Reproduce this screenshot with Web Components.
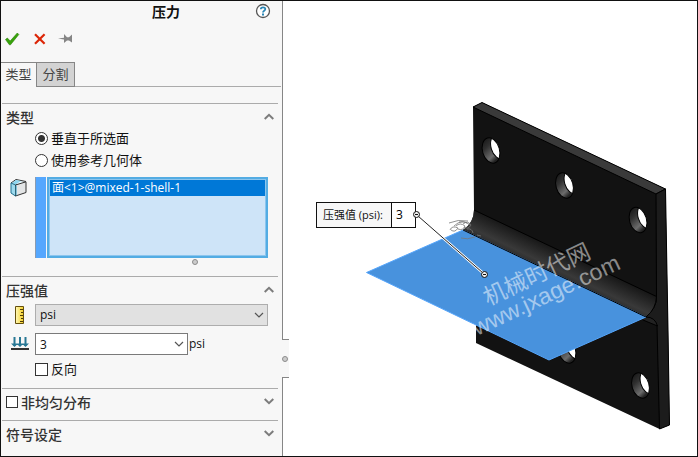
<!DOCTYPE html>
<html lang="zh-CN">
<head>
<meta charset="utf-8">
<title>压力</title>
<style>
html,body{margin:0;height:100%}
body{font:12px/16px "Open Sans","Noto Sans CJK SC",sans-serif;color:#111;background:#fff}
</style>
</head>
<body>
<app-frame>
  <property-panel slot="panel" heading="压力">
    <panel-section heading="类型" open>
      <radio-choice slot="body"></radio-choice>
      <selection-list slot="body"></selection-list>
    </panel-section>
    <panel-section heading="压强值" open>
      <pressure-fields slot="body"></pressure-fields>
    </panel-section>
    <panel-section heading="非均匀分布" checkable></panel-section>
    <panel-section heading="符号设定"></panel-section>
  </property-panel>
  <model-view slot="view"></model-view>
</app-frame>
<script>
const define = (name, html, setup) => customElements.define(name, class extends HTMLElement {
  connectedCallback() {
    if (this.shadowRoot) return;
    this.attachShadow({mode: 'open'}).innerHTML = '<style>*{box-sizing:border-box}button{font:inherit;color:inherit;background:none;border:0;padding:0;display:block}svg{display:block}</style>' + html;
    if (setup) setup(this, this.shadowRoot);
  }
});

define('app-frame', `
<style>
:host{display:flex;min-height:100vh;border:1px solid #111;box-sizing:border-box;background:#fff}
.side{flex:none;width:282px;display:flex;position:relative;background:#f7f7f7;border-right:1px solid #868686}
.view{flex:1;min-width:0;display:flex}
.grip{position:absolute;left:100%;top:338px;width:7px;height:39px;background:#f7f7f7;border:solid #868686;border-width:1px 0;display:flex;align-items:center;z-index:1;box-shadow:-1px 0 #f7f7f7}
i{width:6px;height:6px;border:1px solid #8c8c8c;border-radius:50%;background:#ccc}
</style>
<div class="side"><slot name="panel"></slot><button class="grip" aria-label="折叠面板"><i></i></button></div>
<div class="view"><slot name="view"></slot></div>`);

define('property-panel', `
<style>
:host{flex:1;min-width:0;display:block}
header{display:grid;grid-template-columns:1fr auto;align-items:center;padding:2px 11px 0 76px}
h1{margin:0;font-size:14px;line-height:16px;font-weight:600;text-align:center;font-family:"Noto Sans CJK SC",sans-serif}
.actions{display:flex;align-items:center;gap:11px;padding:5px 4px 0 3px;height:35px;margin-bottom:8px}
.tabs{display:flex;padding-right:1px}
.tabs button{height:25px;border:1px solid #868686;padding:0 5px 2px;font-size:13px;line-height:20px;color:#444}
.tabs .on{border-width:1px 0 0;padding:0 4px 2px;width:35px}
.tabs .off{background:#d3d3d3;width:39px}
.tabs span{flex:1;border-bottom:1px solid #ababab}
main{padding:16px 4px 0 1px}
</style>
<header><h1></h1><button aria-label="帮助"><svg width="16" height="16" viewBox="0 0 16 16"><circle cx="8" cy="8" r="6.5" fill="#fff" stroke="#555" stroke-width="1.3"/><path d="M5.8 6.3C5.8 3.6 10.3 3.7 10.3 6.1C10.3 7.8 8 7.7 8 9.5" fill="none" stroke="#2a86b5" stroke-width="1.8"/><path d="M7 10.6h2v2H7z" fill="#2a86b5"/></svg></button></header>
<div class="actions">
<button aria-label="确定"><svg width="16" height="16" viewBox="0 0 16 16"><path d="M1.5 8.5L3.3 7L6.2 10L13.3 2L14.8 3.5L6.5 13.8H5.4Z" fill="#37a30b" stroke="#278000" stroke-width=".6"/></svg></button>
<button aria-label="取消"><svg width="16" height="16" viewBox="0 0 16 16"><path d="M4 3.2L13.6 12.8M13.6 3.2L4 12.8" stroke="#dc2607" stroke-width="2.2" fill="none"/></svg></button>
<button aria-label="固定"><svg width="16" height="16" viewBox="0 0 16 16"><path d="M0 7.5L6 6.7V3L9 6.2H11L14 3.5V11.5L11 9.4H9L6 12V8.5Z" fill="#858585"/></svg></button>
</div>
<div class="tabs" role="tablist"><button class="on" role="tab" aria-selected="true">类型</button><button class="off" role="tab">分割</button><span></span></div>
<main><slot></slot></main>`, (el, r) => r.querySelector('h1').textContent = el.getAttribute('heading'));

define('panel-section', `
<style>
:host{display:block;border-top:1px solid #ababab}
header{display:flex;align-items:center;height:23px;padding:2px 4px 0 4px}
:host(:not([open])) header{height:31px;padding-top:0;padding-bottom:6px}
h2,label{margin:0;flex:1;font-size:14px;line-height:20px;font-weight:500;color:#333;font-family:"Noto Sans CJK SC",sans-serif}
label{display:flex;align-items:center;gap:3px}
input{appearance:none;width:12px;height:12px;margin:0;border:1px solid #333;background:#fff}
:host(:not([open])) button svg{transform:scaleY(-1)}
</style>
<header><button aria-label="展开或折叠"><svg width="10" height="7" viewBox="0 0 10 7"><path d="M.7 6L5 1.8L9.3 6" fill="none" stroke="#7c7c7c" stroke-width="2"/></svg></button></header>
<slot name="body"></slot>`, (el, r) => {
  const h = document.createElement(el.hasAttribute('checkable') ? 'label' : 'h2');
  if (h.localName === 'label') h.innerHTML = '<input type="checkbox">';
  h.append(el.getAttribute('heading'));
  r.querySelector('header').prepend(h);
});

define('radio-choice', `
<style>
:host{display:block;padding:0 0 6px 33px}
label{display:flex;align-items:center;gap:3px;height:22px;font-size:13px;line-height:20px}
input{appearance:none;width:13px;height:13px;margin:0;border:1px solid #333;border-radius:50%;background:#fff}
input:checked{background:radial-gradient(circle,#333 0 3px,#fff 4px)}
</style>
<label><input type="radio" name="direction" checked>垂直于所选面</label>
<label><input type="radio" name="direction">使用参考几何体</label>`);

define('selection-list', `
<style>
:host{display:grid;grid-template-columns:33px 11px 1fr;padding:0 10px 11px 0}
svg{margin:1px 0 0 8px}
.swatch{background:#55a7fe;border-left:1px solid #8a9bb0}
ul{margin:0 0 0 1px;padding:1px;list-style:none;height:81px;background:#cee4f8;border:2px solid #53ace3;outline:1px solid #8cc5ee;outline-offset:-3px}
li{height:16px;padding:0 2px;font-size:12px;line-height:16px;color:#fff;background:#0078d7;white-space:nowrap}
.dot{grid-column:1/-1;justify-self:center;width:6px;height:6px;margin:1px 0 0 120px;border:1px solid #8c8c8c;border-radius:50%;background:#ccc}
</style>
<svg width="18" height="20" viewBox="0 0 18 20"><path d="M1 5L6 1.5L16 3.5L11 7.5Z" fill="#eaf8fd" stroke="#333"/><path d="M1 5L5.5 7V18L1 15Z" fill="#9edaee" stroke="#20718f"/><path d="M5.5 7L16 3.8V14.5L5.5 18Z" fill="#e3e5e6" stroke="#333"/><path d="M2 5L6 2L11 3L5.500 6.500Z" fill="#8fd6ee"/><path d="M6 7.5V17.5" stroke="#259bc5"/></svg>
<div class="swatch"></div>
<ul role="listbox" aria-label="所选面"><li role="option" aria-selected="true">面&lt;1&gt;@mixed-1-shell-1</li></ul>
<i class="dot"></i>`);

define('pressure-fields', `
<style>
:host{display:grid;grid-template-columns:33px 1fr;row-gap:7px;padding:4px 10px 11px 0}
svg.icon{margin:auto;justify-self:start;margin-left:7px}
.box{position:relative;display:flex}
.box>svg{position:absolute;right:4px;top:8px;pointer-events:none}
.row{display:flex;align-items:center;gap:1px}
.row .box{width:153px}
select,.box input{appearance:none;width:100%;height:22px;margin:0;padding:0 4px;border:1px solid #adadad;border-radius:0;background:#e1e1e1;font:inherit;color:#111;outline:0}
.box input{background:#fff;border-color:#7a7a7a}
.check{grid-column:2;display:flex;align-items:center;gap:3px;font-size:13px;line-height:15px}
.check input{appearance:none;width:13px;height:13px;margin:0;border:1px solid #333;background:#fff}
</style>
<svg class="icon" width="18" height="18" viewBox="0 0 18 18"><defs><linearGradient id="gold"><stop stop-color="#fff9ba"/><stop offset="1" stop-color="#f5cf25"/></linearGradient></defs><path d="M6.5.5h8v17h-8z" fill="url(#gold)" stroke="#65500c"/><path d="M11 3.5h3M12 6.5h2M11 9.5h3M12 12.5h2M11 15.5h3" stroke="#4d3d09"/></svg>
<div class="box"><select aria-label="单位"><option>psi</option></select><svg width="10" height="6" viewBox="0 0 10 6"><path d="M1 1L5 5L9 1" fill="none" stroke="#555" stroke-width="1.2"/></svg></div>
<svg class="icon" width="20" height="14" viewBox="0 0 20 14"><path d="M5.5 0V9M11 0V9M16.5 0V9" stroke="#287895" stroke-width="2"/><path d="M2 6.5H9L5.5 10ZM7.500 6.5H14.5L11 10ZM13 6.5H20L16.5 10Z" fill="#287895"/><path d="M2 11h18v2H2z" fill="#333"/></svg>
<div class="row"><div class="box"><input id="value" aria-label="压强值" value="3"><svg width="10" height="6" viewBox="0 0 10 6"><path d="M1 1L5 5L9 1" fill="none" stroke="#555" stroke-width="1.2"/></svg></div><label for="value">psi</label></div>
<label class="check"><input type="checkbox">反向</label>`);

define('model-view', `
<style>
:host{flex:1;min-width:0;display:flex;background:#fff}
.scene{flex:1;width:100%;height:calc(100vh - 2px)}
.callout{display:flex;width:100px;height:26px;border:1px solid #111;background:#fff;color:#111;font-size:12px;line-height:24px}
label{flex:1;padding-left:6px;background:#f7f7f7;white-space:nowrap;font-size:11px}
input{width:24px;border:0;border-left:1px solid #111;padding:0 4px;margin:0;font:inherit;outline:0;background:#fff}
.mark{fill:#fff;fill-opacity:.52}
</style>
<svg class="scene" viewBox="283 1 414 455" preserveAspectRatio="xMinYMin meet">
<defs>
<linearGradient id="bore" x1="0" y1="0" x2=".35" y2="1"><stop stop-color="#111"/><stop offset=".4" stop-color="#303030"/><stop offset=".8" stop-color="#6c6c6c"/><stop offset="1" stop-color="#222"/></linearGradient>
<linearGradient id="fillet" gradientUnits="userSpaceOnUse" x1="566" y1="252" x2="553" y2="279"><stop stop-color="#151515"/><stop offset=".65" stop-color="#393939"/><stop offset="1" stop-color="#242424"/></linearGradient>
<clipPath id="rim"><ellipse rx="8.5" ry="13" transform="rotate(-16)"/></clipPath>
<g id="hole"><ellipse rx="8.5" ry="13" transform="rotate(-16)" fill="url(#bore)"/><g clip-path="url(#rim)"><ellipse cx="8.5" cy="-4" rx="8.5" ry="13" transform="rotate(-16 8.5 -4)" fill="#fff" stroke="#000"/></g><ellipse rx="8.5" ry="13" transform="rotate(-16)" fill="none" stroke="#000"/></g>
</defs>
<path d="M473 107L482 102.500L665.500 189L668 330L669.500 425L659.500 429L476 343V230H463Q474 223 474 210Z" fill="#121212"/>
<path d="M473 107L482 102.500L665.500 189L656 194Z" fill="#3a3a3a" stroke="#000"/>
<path d="M656 194L665.500 189L668 330L669.500 425L659.500 429L657 325Q651 319 646 317Q657 307 656.500 297Z" fill="#1c1c1c" stroke="#000"/>
<path d="M474 210L656.500 297Q656 309 646 317L463 230Q474 222 474 210Z" fill="url(#fillet)"/>
<path d="M474 210L656.500 296.500Q656 309 646 317" fill="none" stroke="#000"/>
<path d="M646 317Q655 317 657.500 326L643 320" fill="#222" stroke="#000"/>
<use href="#hole" x="491" y="150.500"/><use href="#hole" x="564.500" y="185.500"/><use href="#hole" x="638" y="220"/><use href="#hole" x="567" y="350.500"/><use href="#hole" x="640.500" y="385.500"/>
<path d="M366.500 272.500L463 230L646 317L549 360Z" fill="#4892dd" stroke="#55a5fb"/>
<path d="M463 230L646 317" stroke="#000"/>
<g fill="none" stroke="#777" stroke-width=".8"><path d="M449 223Q458 219 468 221M450 230Q452 225 458 228Q455 233 451 230M456 226Q460 222 465 226Q463 231 458 229M463 224Q468 220 471 225Q468 230 464 227M461 238Q467 240 475 237M467 229Q472 228 473 233M477 235L481 236M459 222Q464 221 467 223M454 226Q462 218 470 225"/></g>
<g class="mark"><text transform="translate(488 306) rotate(-25)" font-family="Noto Sans CJK SC,sans-serif" font-size="23">机械时代网</text><text transform="translate(477 336) rotate(-25)" font-family="Liberation Sans,sans-serif" font-size="23">www.jxage.com</text></g>
<foreignObject x="316" y="202" width="100" height="26"><div class="callout"><label for="psi">压强值 (psi):</label><input id="psi" value="3"></div></foreignObject>
<path d="M418 216L483 273" stroke="#fff" stroke-width="2.500"/><path d="M418 216L483 273" stroke="#222"/>
<g fill="#eee" stroke="#111"><circle cx="416.500" cy="214.500" r="3"/><circle cx="484.500" cy="274.500" r="3"/><path d="M415 214.500h3M483 274.500h3"/></g>
</svg>`);
</script>
</body>
</html>
